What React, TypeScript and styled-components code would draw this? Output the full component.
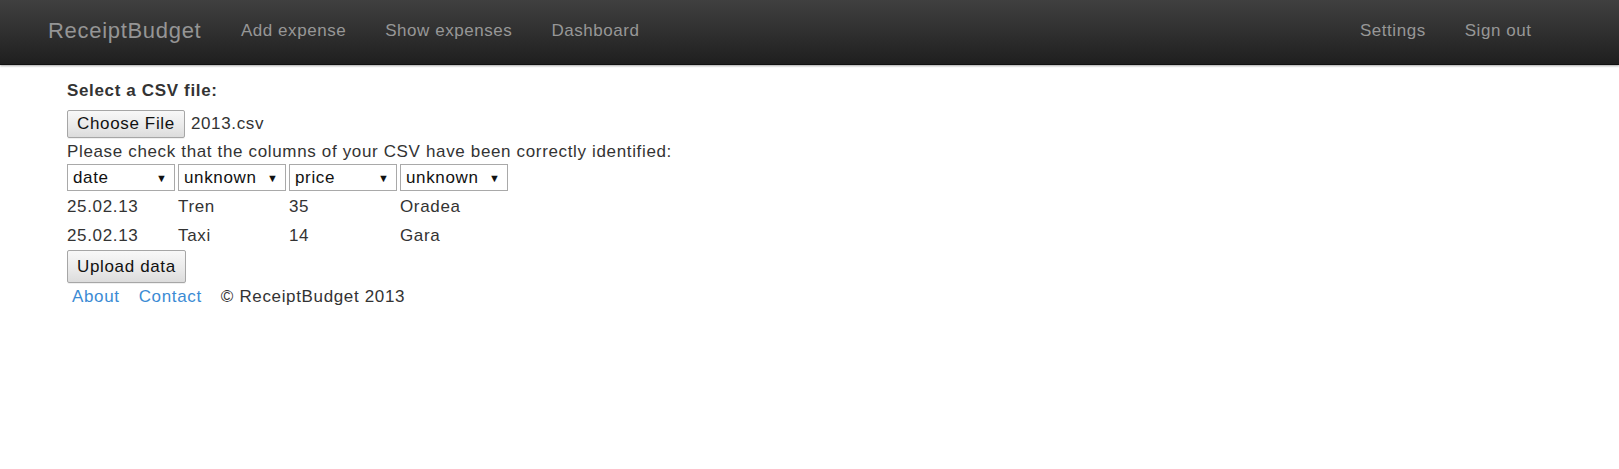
import React from "react";
import styled, { createGlobalStyle } from "styled-components";

const GlobalStyle = createGlobalStyle`
  html, body {
    margin: 0;
    padding: 0;
    background: #ffffff;
  }
  body {
    font-family: "Liberation Sans", Arial, Helvetica, sans-serif;
    font-size: 17px;
    letter-spacing: 0.65px;
    color: #333333;
  }
  * { box-sizing: border-box; }
`;

const NavBar = styled.header`
  height: 65px;
  background: linear-gradient(to bottom, #404040 0%, #1f1f1f 100%);
  border-bottom: 1px solid #111111;
  box-shadow: 0 1px 2px rgba(0, 0, 0, 0.35);
  display: flex;
  align-items: center;
  justify-content: space-between;
  padding: 0 68px 2px 28px;
`;

const NavGroup = styled.nav`
  display: flex;
  align-items: center;
`;

const Brand = styled.a`
  font-size: 22px;
  color: #959595;
  text-decoration: none;
  padding: 0 20px;
  letter-spacing: 0.7px;
`;

const NavLink = styled.a`
  font-size: 17px;
  color: #979797;
  text-decoration: none;
  padding: 0 19.5px;
  letter-spacing: 0.55px;
`;

const Main = styled.main`
  padding: 14px 0 0 67px;
  display: flex;
  flex-direction: column;
  align-items: flex-start;
`;

const FieldLabel = styled.label`
  font-weight: bold;
  line-height: 24px;
`;

const FileRow = styled.div`
  display: flex;
  align-items: center;
  gap: 6px;
  margin-top: 7px;
`;

const Button = styled.button<{ $tall?: boolean }>`
  font-family: "Liberation Sans", Arial, Helvetica, sans-serif;
  font-size: 17px;
  letter-spacing: 0.65px;
  color: #111111;
  height: ${(p) => (p.$tall ? "33px" : "28px")};
  padding: 0 9px;
  border: 1px solid #a6a6a6;
  border-radius: 2px;
  background: linear-gradient(to bottom, #f8f8f8 0%, #e9e9e9 60%, #dcdcdc 100%);
  box-shadow: 0 1px 0 rgba(0, 0, 0, 0.06);
  cursor: pointer;
`;

const FileName = styled.span`
  line-height: 24px;
`;

const Hint = styled.p`
  margin: 2px 0 0;
  line-height: 24px;
`;

const Grid = styled.div`
  display: grid;
  grid-template-columns: repeat(4, 108px);
  column-gap: 3px;
`;

const SelectWrap = styled.div`
  position: relative;
  height: 27px;
  margin-bottom: 1px;
`;

const Select = styled.select`
  appearance: none;
  -webkit-appearance: none;
  width: 108px;
  height: 27px;
  border: 1px solid #a9a9a9;
  border-radius: 0;
  background: #ffffff;
  font-family: "Liberation Sans", Arial, Helvetica, sans-serif;
  font-size: 17px;
  letter-spacing: 0.65px;
  color: #111111;
  padding: 0 0 0 5px;
  outline: none;
`;

const Arrow = styled.span`
  position: absolute;
  right: 8px;
  top: 50%;
  transform: translateY(-50%);
  font-size: 11px;
  color: #111111;
  pointer-events: none;
  letter-spacing: 0;
`;

const Cell = styled.div`
  line-height: 29px;
  white-space: nowrap;
`;

const UploadRow = styled.div`
  margin-top: 0;
`;

const Footer = styled.footer`
  display: flex;
  align-items: center;
  gap: 19px;
  padding-left: 5px;
  margin-top: 2px;
  line-height: 24px;
`;

const FooterLink = styled.a`
  color: #3b8bd4;
  text-decoration: none;
`;

const columns = ["date", "unknown", "price", "unknown"];
const options = ["date", "unknown", "price", "description", "category"];
const rows = [
  ["25.02.13", "Tren", "35", "Oradea"],
  ["25.02.13", "Taxi", "14", "Gara"],
];

export default function App() {
  return (
    <>
      <GlobalStyle />
      <NavBar>
        <NavGroup>
          <Brand href="#">ReceiptBudget</Brand>
          <NavLink href="#">Add expense</NavLink>
          <NavLink href="#">Show expenses</NavLink>
          <NavLink href="#">Dashboard</NavLink>
        </NavGroup>
        <NavGroup>
          <NavLink href="#">Settings</NavLink>
          <NavLink href="#">Sign out</NavLink>
        </NavGroup>
      </NavBar>
      <Main>
        <FieldLabel>Select a CSV file:</FieldLabel>
        <FileRow>
          <Button type="button">Choose File</Button>
          <FileName>2013.csv</FileName>
        </FileRow>
        <Hint>Please check that the columns of your CSV have been correctly identified:</Hint>
        <Grid>
          {columns.map((c, i) => (
            <SelectWrap key={i}>
              <Select defaultValue={c}>
                {options.map((o) => (
                  <option key={o} value={o}>
                    {o}
                  </option>
                ))}
              </Select>
              <Arrow>▼</Arrow>
            </SelectWrap>
          ))}
          {rows.map((r, ri) =>
            r.map((v, ci) => <Cell key={`${ri}-${ci}`}>{v}</Cell>)
          )}
        </Grid>
        <UploadRow>
          <Button type="button" $tall>
            Upload data
          </Button>
        </UploadRow>
        <Footer>
          <FooterLink href="#">About</FooterLink>
          <FooterLink href="#">Contact</FooterLink>
          <span>© ReceiptBudget 2013</span>
        </Footer>
      </Main>
    </>
  );
}
